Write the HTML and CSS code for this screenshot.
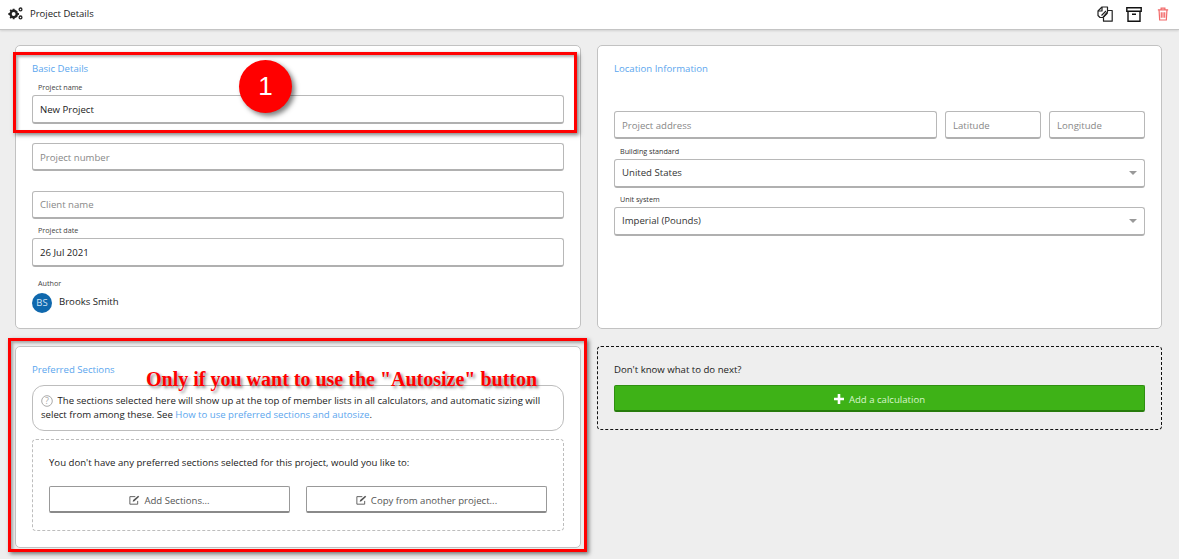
FILE: index.html
```html
<!DOCTYPE html>
<html lang="en">
<head>
<meta charset="utf-8">
<title>Project Details</title>
<link rel="stylesheet" href="styles.css">
</head>
<body>
<header class="topbar">
  <svg class="gears" viewBox="0 0 16 14" width="15" height="13"><g fill="#222"><circle cx="6" cy="7.5" r="3.4" fill="none" stroke="#222" stroke-width="2.6"/><path d="M5 1.8h2v2H5zM5 11.2h2v2H5zM.3 6.5h2v2h-2zM9.7 6.5h2v2h-2zM1.6 3.8l1.4-1.4 1.3 1.3-1.4 1.4zM7.7 9.9l1.4-1.4 1.3 1.3L9 11.2zM1.6 11.2l1.3-1.4 1.4 1.4L3 12.6zM7.7 5.1l1.4-1.4 1.3 1.4L9 6.5z"/></g><circle cx="13.4" cy="2.6" r="1.5" fill="none" stroke="#222" stroke-width="1.4"/><circle cx="13.4" cy="11.2" r="1.5" fill="none" stroke="#222" stroke-width="1.4"/></svg>
  <span class="title">Project Details</span>
  <div class="actions">
    <svg viewBox="0 0 16 16" width="16" height="16" fill="none" stroke="#222" stroke-width="1.2" stroke-linejoin="round"><path d="M8.5 4.5h6.7v10.7H6.5V12" fill="#fff"/><path d="M1 9.5V5l4-4h5.5v5L6 11.5H3z" fill="#fff"/><path d="M5 1v4H1M4.5 9.5L9 5M6 11.5L10.5 7"/></svg>
    <svg viewBox="0 0 16 16" width="16" height="16" fill="none" stroke="#111" stroke-width="1.4"><path d="M.8 1.7h14.4v3.6H.8zM2 5.3v9.9h12V5.3M6 8.3h4"/></svg>
    <svg class="trash" viewBox="0 0 14 16" width="12" height="14" fill="none" stroke="#f26a6a" stroke-width="1.4"><path d="M1 3.2h12M4.8 3V1.2h4.4V3M2.4 3.4l.7 11.6h7.8l.7-11.6M5 6v6.5M7 6v6.5M9 6v6.5"/></svg>
  </div>
</header>

<main class="page">
  <section class="card">
    <h2 class="heading">Basic Details</h2>
    <div class="stack">
      <div class="field"><label class="label">Project name</label><div class="input value">New Project</div></div>
      <div class="field"><span class="label"></span><div class="input ghost">Project number</div></div>
      <div class="field"><span class="label"></span><div class="input ghost">Client name</div></div>
      <div class="field"><label class="label">Project date</label><div class="input value">26 Jul 2021</div></div>
    </div>
    <div class="author">
      <span class="label author-label">Author</span>
      <div class="author-row"><span class="avatar">BS</span><span class="author-name">Brooks Smith</span></div>
    </div>
  </section>

  <section class="card">
    <h2 class="heading">Location Information</h2>
    <div class="location">
      <div class="address-row">
        <div class="input ghost">Project address</div>
        <div class="input ghost">Latitude</div>
        <div class="input ghost">Longitude</div>
      </div>
      <div class="field select-field"><label class="label dark">Building standard</label><div class="input value select">United States<i class="caret"></i></div></div>
      <div class="field select-field"><label class="label dark">Unit system</label><div class="input value select">Imperial (Pounds)<i class="caret"></i></div></div>
    </div>
  </section>

  <section class="card sections">
    <h2 class="heading">Preferred Sections</h2>
    <div class="note">
      <svg class="help" viewBox="0 0 12 12" width="12" height="12"><circle cx="6" cy="6" r="5.3" fill="none" stroke="#aaa"/><text x="6" y="9" text-anchor="middle" class="help-mark">?</text></svg>
      The sections selected here will show up at the top of member lists in all calculators, and automatic sizing will select from among these. See <a class="link">How to use preferred sections and autosize</a>.
    </div>
    <div class="empty">
      <p class="empty-text">You don't have any preferred sections selected for this project, would you like to:</p>
      <div class="btn-row">
        <button class="btn"><svg viewBox="0 0 12 11" width="11" height="10" fill="none" stroke="#555"><path d="M9.5 6.5v3.6H.9V1.8h6" stroke-width="1"/><path d="M4 7.5l.5-2L10 .8l1.2 1.2-5.3 5z" fill="#555" stroke="none"/></svg>Add Sections...</button>
        <button class="btn"><svg viewBox="0 0 12 11" width="11" height="10" fill="none" stroke="#555"><path d="M9.5 6.5v3.6H.9V1.8h6" stroke-width="1"/><path d="M4 7.5l.5-2L10 .8l1.2 1.2-5.3 5z" fill="#555" stroke="none"/></svg>Copy from another project...</button>
      </div>
    </div>
  </section>

  <section class="next">
    <p class="next-text">Don't know what to do next?</p>
    <button class="btn-green"><svg viewBox="0 0 10 10" width="10" height="10"><path d="M3.7 0h2.6v3.7H10v2.6H6.3V10H3.7V6.3H0V3.7h3.7z" fill="#fff"/></svg>Add a calculation</button>
  </section>
</main>

<div class="mark mark-one"></div>
<div class="mark mark-two"></div>
<div class="badge">1</div>
<div class="callout">Only if you want to use the "Autosize" button</div>
</body>
</html>
```
FILE: styles.css
```css
* { box-sizing: border-box; }
html, body { margin: 0; height: 559px; overflow: hidden; }
body {
  background: #eeeeee;
  font-family: "Open Sans", sans-serif;
  font-size: 10px;
  color: #222;
  position: relative;
}
.topbar {
  height: 30px;
  background: #fff;
  border-bottom: 1px solid #c4c4c4;
  box-shadow: 0 1px 2px rgba(0,0,0,.12);
  display: flex;
  align-items: center;
  padding: 0 10px 2px 8px;
}
.gears { margin-right: 7px; }
.title { font-size: 9.5px; color: #222; }
.actions { margin-left: auto; display: flex; align-items: center; gap: 13px; }
.trash { margin-left: 2px; }
.page {
  display: grid;
  grid-template-columns: 566px 565px;
  grid-template-rows: 284px 202px;
  column-gap: 16px;
  row-gap: 17px;
  padding: 15px 0 0 15px;
}
.card {
  background: #fff;
  border: 1px solid #c2c2c2;
  border-radius: 5px;
  padding: 16px 16px 0;
}
.heading {
  margin: 0;
  font-size: 9.6px;
  line-height: 14px;
  font-weight: 400;
  color: #5ba6ee;
}
.stack { margin-top: 3.33px; }
.field { display: flex; flex-direction: column; margin-bottom: 3.33px; }
.label {
  display: block;
  height: 16px;
  padding-left: 6px;
  font-size: 7.2px;
  line-height: 16px;
  color: #444;
}
.label.dark { padding-left: 6px; color: #333; }
.input {
  height: 28.33px;
  display: flex;
  align-items: center;
  padding: 1px 7px 0;
  background: #fff;
  border: 1px solid #b8b8b8;
  border-bottom: 2px solid #b0b0b0;
  border-radius: 3px;
  font-size: 9.6px;
}
.value { color: #222; }
.ghost { color: #888; }
.author { margin-top: 9px; }
.author-label { height: 14px; line-height: 14px; padding-left: 6px; }
.author-row { display: flex; align-items: center; gap: 8px; height: 26px; }
.avatar {
  width: 20px;
  height: 20px;
  border-radius: 50%;
  background: #0f68ad;
  color: #cfe3f5;
  font-size: 9.5px;
  display: flex;
  align-items: center;
  justify-content: center;
}
.author-name { font-size: 9.6px; color: #222; margin-left: -1px; padding-bottom: 2px; }
.location { margin-top: 35px; }
.address-row { display: grid; grid-template-columns: 323px 96px 96px; column-gap: 8px; margin-bottom: 4px; }
.select-field { margin-bottom: 3.67px; }
.input.select { position: relative; color: #333; padding-top: 0; }
.caret {
  position: absolute;
  right: 7px;
  top: 11px;
  border-left: 4px solid transparent;
  border-right: 4px solid transparent;
  border-top: 4px solid #999;
}
.note {
  margin-top: 8px;
  height: 46px;
  padding: 8px 8px 0;
  border: 1px solid #bdbdbd;
  border-radius: 12px;
  font-size: 9.6px;
  line-height: 14px;
  color: #222;
}
.help { vertical-align: -2.5px; margin-right: 2px; }
.help-mark { font-size: 9px; fill: #aaa; }
.link { color: #5ba6ee; }
.empty {
  margin-top: 8px;
  height: 92px;
  padding: 0 16px;
  border: 1px dashed #bdbdbd;
  border-radius: 4px;
}
.empty-text { margin: 0; padding-top: 16px; font-size: 9.6px; line-height: 14px; color: #222; }
.btn-row { display: grid; grid-template-columns: 241px 241px; column-gap: 16px; margin-top: 16px; }
.btn {
  height: 27px;
  background: #fff;
  border: 1px solid #999;
  border-bottom: 2px solid #8a8a8a;
  border-radius: 2px;
  font: 9.6px "Open Sans", sans-serif;
  color: #555;
  display: flex;
  align-items: center;
  justify-content: center;
  gap: 4px;
  padding: 2px 0 0;
}
.next {
  height: 84px;
  padding: 16px 16px 0;
  border: 1px dashed #111;
  border-radius: 4px;
}
.next-text { margin: 0; font-size: 9.6px; line-height: 14px; color: #222; }
.btn-green {
  width: 531px;
  height: 27px;
  margin-top: 8px;
  background: #3eb217;
  border: 1px solid #2f8f10;
  border-bottom: 2px solid #277c0c;
  border-radius: 2px;
  color: #d8f5cc;
  font: 9.6px "Open Sans", sans-serif;
  display: flex;
  align-items: center;
  justify-content: center;
  gap: 5px;
  padding: 2px 0 0;
}
.mark {
  position: absolute;
  border: 3px solid #ff0000;
  box-shadow: 2px 2px 4px rgba(0,0,0,.5), inset 2px 2px 3px rgba(0,0,0,.3);
  pointer-events: none;
}
.mark-one { left: 13px; top: 52px; width: 564px; height: 81px; }
.mark-two { left: 8px; top: 338px; width: 579px; height: 214px; }
.badge {
  position: absolute;
  left: 239px;
  top: 60px;
  width: 53px;
  height: 53px;
  border-radius: 50%;
  background: #ff0000;
  color: #fff;
  font: 26px/53px "Liberation Sans", sans-serif;
  text-align: center;
  box-shadow: 3px 3px 5px rgba(0,0,0,.5);
}
.callout {
  position: absolute;
  left: 146px;
  top: 368px;
  font: bold 20px/22px "Liberation Serif", serif;
  color: #ff0000;
  white-space: nowrap;
  text-shadow: 2px 2px 3px rgba(0,0,0,.45);
}
```
